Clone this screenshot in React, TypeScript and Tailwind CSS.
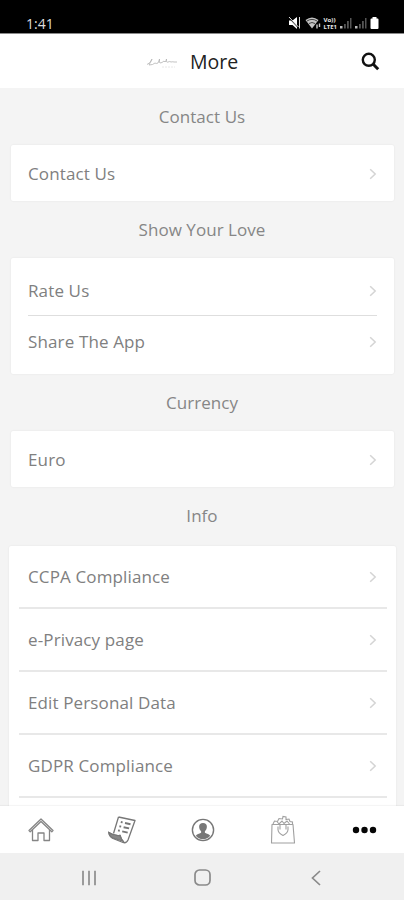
import { ReactNode } from 'react';

type Section = {
  title: string;
  items: string[];
  variant: 'single' | 'compact' | 'wide';
};

const sections: Section[] = [
  { title: 'Contact Us', items: ['Contact Us'], variant: 'single' },
  { title: 'Show Your Love', items: ['Rate Us', 'Share The App'], variant: 'compact' },
  { title: 'Currency', items: ['Euro'], variant: 'single' },
  {
    title: 'Info',
    items: ['CCPA Compliance', 'e-Privacy page', 'Edit Personal Data', 'GDPR Compliance'],
    variant: 'wide',
  },
];

const cardStyles = {
  single: 'mr-[10px] ml-[11px]',
  compact: 'mr-[10px] ml-[11px] py-[7px]',
  wide: 'mt-[2px] mr-2 ml-[9px] pb-16',
};

const rowStyles = {
  single: 'mr-[17px] ml-[17px] h-14 pt-px',
  compact: 'mr-[17px] ml-[17px] h-[51px] pt-px',
  wide: 'mr-[9px] ml-[10px] h-[63px] pt-px pl-[9px] pr-[10px] border-b-2 border-[#e8e8e8]',
};

function Chevron() {
  return (
    <svg width="8" height="12" viewBox="0 0 8 12" fill="none" stroke="#d4d4d4" strokeWidth="1.5">
      <path d="M1.2 1.2 6.2 6 1.2 10.800" />
    </svg>
  );
}

function StatusBar() {
  return (
    <div className="flex h-[33px] shrink-0 items-end justify-between bg-black pr-[23px] pl-[26px] text-white">
      <span className="mb-[1px] text-[14px] leading-[17px] font-medium text-[#dedede]">1:41</span>
      <svg className="mb-[2px]" width="93" height="16" viewBox="0 0 93 16" fill="#e8e8e8">
        <path d="M1 5.500h3.500L9 2v12l-4.500-4H1z" fill="#fff" />
        <path d="M1 3l9 9.500" stroke="#000" strokeWidth="1" />
        <path d="M1 2l9.500 10M11.500 2v11.500" stroke="#ddd" strokeWidth="1" />
        <path d="M17.500 5Q24 0 30.500 5L24 13.500z" fill="#c4c4c4" />
        <path d="M19 6Q24 2.800 29 6M21 8.500Q24 6.500 27 8.500" fill="none" stroke="#222" strokeWidth=".8" />
        <path d="M29 9.500v4M31.500 8.500v3.500" stroke="#ccc" strokeWidth="1.400" />
        <text x="35.500" y="6.800" fontSize="5.500" fontWeight="700" textLength="12" lengthAdjust="spacingAndGlyphs">Vo))</text>
        <text x="35.500" y="14.300" fontSize="5.500" fontWeight="700" textLength="13.500" lengthAdjust="spacingAndGlyphs">LTE1</text>
        <path d="M52 11h2.500v2.500H52zM67 11h2.500v2.500H67z" fill="#bbb" />
        <path d="M56 9h1.800v4.500H56zM59 6h1.800v7.500H59zM62 3h1.500v10.500H62zM71 9h1.800v4.500H71zM74 6h1.800v7.500H74zM77 3h1.500v10.500H77z" fill="#555" />
        <path d="M82.500 4.500q0-1 1-1h1v-1.500h4v1.500h1q1 0 1 1v8.500q0 1-1 1h-6q-1 0-1-1z" fill="#fff" />
      </svg>
    </div>
  );
}

function Header() {
  return (
    <header className="flex h-[55px] shrink-0 items-center border-t border-[#8a8a8a] bg-white pr-[24px] pl-[147px]">
      <svg className="mt-[4px] mr-[13px]" width="30" height="10" viewBox="0 0 30 10" fill="none" stroke="#b4b4b4" strokeWidth=".8">
        <path d="M0 6.500Q4 5 5 1 3 5 2 7q4 0 6-2 1 1 3 0 1-2 1.500-4-.5 4 .5 4 2 0 4-2 1 2 2 0l.5-2q-.5 4 1.500 3 2-1 3 0 2-.5 3 0h3" />
        <path d="M15 9h13" stroke="#e2e2e2" strokeDasharray="2 1" />
      </svg>
      <h1 className="mt-px text-[19.5px] leading-7 text-[#222]">More</h1>
      <svg className="mt-px ml-auto" width="19" height="19" viewBox="0 0 19 19" fill="none" stroke="#111">
        <circle cx="7.800" cy="7.800" r="6" strokeWidth="2.400" />
        <path d="m12 12 5.200 5.200" strokeWidth="3" />
      </svg>
    </header>
  );
}

function SectionCard({ title, items, variant }: Section) {
  return (
    <section>
      <h2 className="flex h-[57px] items-center justify-center text-[17px] tracking-[0.05px] text-[#868686]">{title}</h2>
      <ul className={`rounded-[2px] bg-white shadow-[0_0_2px_rgba(0,0,0,0.08)] ${cardStyles[variant]}`}>
        {items.map((item, index) => (
          <li
            key={item}
            className={`flex items-center justify-between text-[17px] tracking-[0.13px] text-[#808080] ${rowStyles[variant]} ${
              variant === 'compact' && index === 0 ? 'border-b border-[#dedede]' : ''
            }`}
          >
            <span>{item}</span>
            <Chevron />
          </li>
        ))}
      </ul>
    </section>
  );
}

function HomeIcon() {
  return (
    <svg className="mr-[2px]" width="26" height="24" viewBox="0 0 26 24" fill="none" stroke="#858585" strokeWidth="1.300">
      <path d="M4.500 12v10.500h5.500v-7.500h6v7.500h5.500V12M1 12.500 13 1l12 11.500-1.200 1.200L13 3.500 2.200 13.700z" strokeLinejoin="round" />
    </svg>
  );
}

function OrdersIcon() {
  return (
    <svg className="mr-[2px]" width="28" height="28" viewBox="0 0 28 28" fill="none" stroke="#777" strokeWidth="1.300">
      <path d="M10.500 1 27 4.500 20 24q-1.500 3.500-5 2.500L5 22.500Q1.500 21 .8 16.500q6 4 11.200 3 1 4 4 6.500M10.500 1 5.500 17.500" strokeLinejoin="round" />
      <path d="M.8 16.500q6 4 11.200 3 .5 2 2.500 5.500L5 22q-3.500-1.500-4.200-5.500z" fill="#888" />
      <path d="m12.800 6 1.800.4m2.400.6 5.500 1.200M11.400 10.200l1.800.4m2.400.6 5.500 1.200M10 14.400l1.800.4m2.400.6 5.500 1.200" strokeWidth="1.900" />
    </svg>
  );
}

function AccountIcon() {
  return (
    <svg width="24" height="24" viewBox="0 0 24 24">
      <circle cx="12" cy="12" r="10.600" fill="#fff" stroke="#777" strokeWidth="1.400" />
      <path d="M12 5c-2.800 0-4.200 1.800-3.800 4.500.2 1.800 1 3 1.900 3.700v1.600c-2 1-4.300 1.200-5.300 3a9.300 9.300 0 0 0 14.400 0c-1-1.800-3.300-2-5.300-3v-1.600c.9-.7 1.700-1.900 1.900-3.700C16.200 6.800 14.800 5 12 5z" fill="#777" />
    </svg>
  );
}

function BagIcon() {
  return (
    <svg width="26" height="30" viewBox="0 0 26 30" fill="none" stroke="#a0a0a0" strokeWidth="1.100">
      <path d="M2 9.500h21L24.500 28h-23z" strokeLinejoin="round" />
      <path d="M3 9 4.500 6l3 .5L9 3.500l3.500.5L13 1.500l3 .5v2.500l3-.5 1 2.500 2.500.5V9.500M7 6.500 9 9l3-3 2 2.500L17 6l2.500 3" />
      <path d="M8 11.500v3q0 3.500 5 6 5-2.500 5-6v-3M10 9.500v5m6-5v5" />
    </svg>
  );
}

function MoreIcon() {
  return (
    <svg className="ml-[2px]" width="25" height="8" viewBox="0 0 25 8" fill="#050505">
      <circle cx="4" cy="4" r="3.200" />
      <circle cx="12.500" cy="4" r="3.200" />
      <circle cx="21" cy="4" r="3.200" />
    </svg>
  );
}

function TabButton({ label, children }: { label: string; children: ReactNode }) {
  return (
    <button aria-label={label} className="flex h-full flex-1 items-center justify-center">
      {children}
    </button>
  );
}

function TabBar() {
  return (
    <nav className="flex h-[47px] shrink-0 bg-white pl-[2px] shadow-[0_-1px_1px_rgba(0,0,0,0.04)]">
      <TabButton label="Home"><HomeIcon /></TabButton>
      <TabButton label="Orders"><OrdersIcon /></TabButton>
      <TabButton label="Account"><AccountIcon /></TabButton>
      <TabButton label="Bag"><BagIcon /></TabButton>
      <TabButton label="More"><MoreIcon /></TabButton>
    </nav>
  );
}

function SystemBar() {
  return (
    <div className="flex h-[47px] shrink-0 items-center bg-[#f0f0f0] pt-[2px] pl-[81px]">
      <svg width="16" height="16" viewBox="0 0 16 16" stroke="#929292" strokeWidth="1.800">
        <path d="M2 .8v14.400M8 .8v14.400M14 .8v14.400" />
      </svg>
      <svg className="ml-[97px]" width="17" height="17" viewBox="0 0 17 17" fill="none" stroke="#8a8a8a" strokeWidth="1.700">
        <rect x="1" y="1" width="15" height="15" rx="4.500" />
      </svg>
      <svg className="ml-[100px]" width="10" height="16" viewBox="0 0 10 16" fill="none" stroke="#8a8a8a" strokeWidth="1.700">
        <path d="M9 1 1.500 8 9 15" />
      </svg>
    </div>
  );
}

export default function App() {
  return (
    <div className="flex h-[900px] w-[404px] flex-col overflow-hidden bg-[#f4f4f4] font-['Open_Sans',sans-serif]">
      <StatusBar />
      <Header />
      <main className="min-h-0 flex-1 overflow-hidden">
        {sections.map((section) => (
          <SectionCard key={section.title} {...section} />
        ))}
      </main>
      <TabBar />
      <SystemBar />
    </div>
  );
}
